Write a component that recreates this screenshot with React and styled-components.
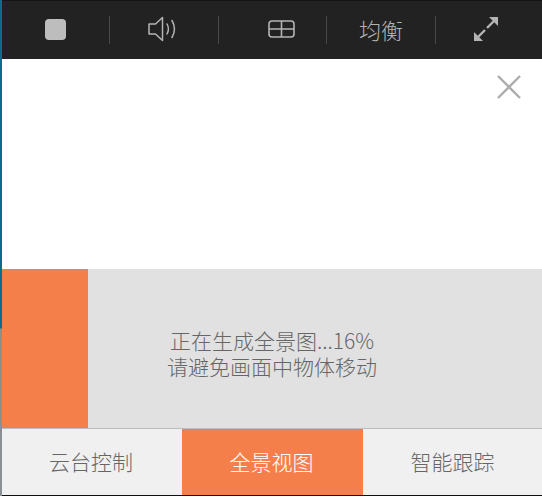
import React from "react";
import styled, { createGlobalStyle } from "styled-components";

const Global = createGlobalStyle`
  html, body { margin: 0; padding: 0; background: #fff; }
  body { font-family: "Noto Sans CJK SC", "Noto Sans", sans-serif; }
`;

const Page = styled.div`
  width: 542px;
  height: 496px;
  display: flex;
  overflow: hidden;
`;

const EdgeStrip = styled.div`
  width: 2px;
  flex: none;
  background: linear-gradient(to bottom, #0b6a90 0, #0b6a90 328px, #8a8f92 329px, #8a8f92 100%);
`;

const Main = styled.div`
  flex: 1;
  min-width: 0;
  display: flex;
  flex-direction: column;
`;

const Toolbar = styled.div`
  height: 59px;
  flex: none;
  display: flex;
  align-items: center;
  padding-top: 1px;
  box-sizing: border-box;
  background: #222222;
  box-shadow: inset 0 1px 0 #141414;
`;

const ToolCell = styled.div`
  width: ${p => p.$w}px;
  flex: none;
  height: 28px;
  box-sizing: border-box;
  display: flex;
  align-items: center;
  justify-content: center;
  padding: 0 ${p => p.$pr || 0}px 2px ${p => p.$pl || 0}px;
  color: #b4b4b4;
  font-size: 22px;
  font-weight: 300;
  border-right: ${p => (p.$last ? "none" : "1px solid #484848")};
`;

const Viewport = styled.div`
  height: 210px;
  flex: none;
  background: #fff;
  display: flex;
  justify-content: flex-end;
  padding: 16px 21px 0 0;
  box-sizing: border-box;
`;

const Progress = styled.div`
  position: relative;
  height: 159px;
  flex: none;
  background: #e1e1e1;
  display: flex;
  flex-direction: column;
  align-items: center;
  justify-content: flex-end;
  padding: 0 0 49px 0;
  box-sizing: border-box;
`;

const Fill = styled.div`
  position: absolute;
  left: 0;
  top: 0;
  bottom: 0;
  background: #f57f4b;
`;

const Message = styled.div`
  position: relative;
  color: #666666;
  font-size: 21px;
  line-height: 26px;
  font-weight: 300;
  text-align: center;
  white-space: nowrap;
`;

const Tabs = styled.div`
  height: 68px;
  flex: none;
  display: flex;
  box-sizing: border-box;
  border-top: 1px solid #bdbdbd;
  border-bottom: 1px solid #111;
`;

const Tab = styled.div`
  width: ${p => p.$w}px;
  flex: none;
  display: flex;
  align-items: center;
  justify-content: center;
  padding: 0 ${p => p.$pr || 0}px 3px 0;
  box-sizing: border-box;
  font-size: 21px;
  font-weight: 300;
  background: ${p => (p.$active ? "#f57f4b" : "#f0f0f0")};
  color: ${p => (p.$active ? "#fff" : "#666666")};
`;

const Stop = styled.div`
  width: 21px;
  height: 21px;
  border-radius: 4px;
  background: #bdbdbd;
`;

const Speaker = () => (
  <svg width="28" height="26" viewBox="0 0 28 26" fill="none" stroke="#b4b4b4" strokeWidth="1.5">
    <path d="M1 8h6.500L14.500 1.500v23L7.500 18H1z" strokeLinejoin="round" />
    <path d="M19 8c1.800 3.200 1.800 6.800 0 10" strokeLinecap="round" />
    <path d="M24 4.500c3.200 5.500 3.200 11.500 0 17" strokeLinecap="round" />
  </svg>
);

const Grid = () => (
  <svg width="27" height="18" viewBox="0 0 27 18" fill="none" stroke="#b4b4b4" strokeWidth="1.6">
    <rect x="1" y="1" width="25" height="16" rx="3" />
    <path d="M1 9h25M13.500 1v16" />
  </svg>
);

const Expand = () => (
  <svg width="24" height="24" viewBox="0 0 24 24" fill="none" stroke="#b4b4b4" strokeWidth="2.4">
    <path d="M13 11l7-7" />
    <path d="M15 0h9v9z" fill="#b4b4b4" stroke="none" />
    <path d="M11 13l-7 7" />
    <path d="M0 15v9h9z" fill="#b4b4b4" stroke="none" />
  </svg>
);

const Close = () => (
  <svg width="24" height="24" viewBox="0 0 24 24" stroke="#adadad" strokeWidth="2.4" fill="none">
    <path d="M1 1l22 22M23 1L1 23" />
  </svg>
);

export default function App() {
  return (
    <Page>
      <Global />
      <EdgeStrip />
      <Main>
        <Toolbar>
          <ToolCell $w={108}><Stop /></ToolCell>
          <ToolCell $w={109} $pr={4}><Speaker /></ToolCell>
          <ToolCell $w={108} $pl={18}><Grid /></ToolCell>
          <ToolCell $w={109}>均衡</ToolCell>
          <ToolCell $w={106} $last $pr={7}><Expand /></ToolCell>
        </Toolbar>
        <Viewport><Close /></Viewport>
        <Progress>
          <Fill style={{ width: `${(16 / 100) * 540}px` }} />
          <Message>正在生成全景图...16%<br />请避免画面中物体移动</Message>
        </Progress>
        <Tabs>
          <Tab $w={180} $pr={2}>云台控制</Tab>
          <Tab $w={181} $pr={2} $active>全景视图</Tab>
          <Tab $w={179}>智能跟踪</Tab>
        </Tabs>
      </Main>
    </Page>
  );
}
